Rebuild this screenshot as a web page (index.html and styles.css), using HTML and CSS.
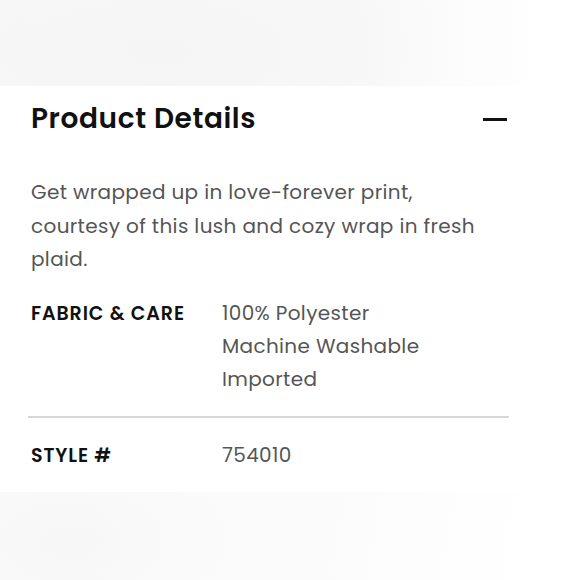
FILE: index.html
```html
<!DOCTYPE html>
<html lang="en">
<head>
<meta charset="utf-8">
<title>Product Details</title>
<link rel="stylesheet" href="styles.css">
</head>
<body>
<div class="band band-top"></div>
<section class="details">
  <header class="details-head">
    <h2 class="details-title">Product Details</h2>
    <span class="collapse-icon" aria-label="Collapse"></span>
  </header>
  <p class="details-desc">Get wrapped up in love-forever print, courtesy of this lush and cozy wrap in fresh plaid.</p>
  <div class="spec-row spec-row-border">
    <div class="spec-label">FABRIC &amp; CARE</div>
    <div class="spec-value">
      <div>100% Polyester</div>
      <div>Machine Washable</div>
      <div>Imported</div>
    </div>
  </div>
  <div class="spec-row">
    <div class="spec-label">STYLE #</div>
    <div class="spec-value"><div>754010</div></div>
  </div>
</section>
<div class="band band-bottom"></div>
</body>
</html>
```
FILE: styles.css
```css
* { box-sizing: border-box; }
html, body { margin: 0; padding: 0; }
body {
  background: #ffffff;
  font-family: "Poppins", Inter, "Noto Sans", sans-serif;
  color: #111;
  width: 580px;
  height: 580px;
  overflow: hidden;
}
.band { width: 100%; }
.band-top {
  height: 86px;
  background:
    radial-gradient(ellipse 300px 120px at 160px 50px, #f5f5f5 0%, rgba(247,247,247,0) 100%),
    linear-gradient(90deg, #f7f7f7 0%, #f8f8f8 60%, #fdfdfd 85%, #ffffff 95%);
}
.band-bottom {
  height: 88px;
  background:
    radial-gradient(ellipse 160px 90px at 70px 50px, #f7f7f7 0%, rgba(249,249,249,0) 100%),
    linear-gradient(100deg, #fafafa 0%, #fbfbfb 55%, #fefefe 80%, #ffffff 100%);
}
.details {
  height: 406px;
  padding: 0 71px 0 31px;
  background: #fff;
}
.details-head {
  height: 64px;
  padding-top: 2px;
  display: flex;
  align-items: center;
  justify-content: space-between;
}
.details-title {
  margin: 0;
  font-size: 28px;
  font-weight: 600;
  color: #111;
  letter-spacing: 0.6px;
}
.collapse-icon {
  width: 24px;
  height: 3px;
  background: #111;
  margin-right: 2px;
}
.details-desc {
  margin: 26px 0 0;
  max-width: 460px;
  font-size: 20px;
  line-height: 33.5px;
  color: #555;
  letter-spacing: 0.35px;
}
.spec-row {
  display: flex;
  padding: 20px 0 0;
}
.spec-row-border {
  border-bottom: 2px solid #d6d6d6;
  padding-bottom: 20px;
  margin-left: -3px;
  padding-left: 3px;
}
.spec-label {
  width: 191px;
  flex: none;
  font-size: 19px;
  font-weight: 600;
  letter-spacing: 0.9px;
  color: #111;
  line-height: 33px;
}
.spec-value {
  font-size: 20px;
  line-height: 33px;
  color: #555;
  letter-spacing: 0.35px;
}
.spec-row + .spec-row { padding-top: 21px; }
```
